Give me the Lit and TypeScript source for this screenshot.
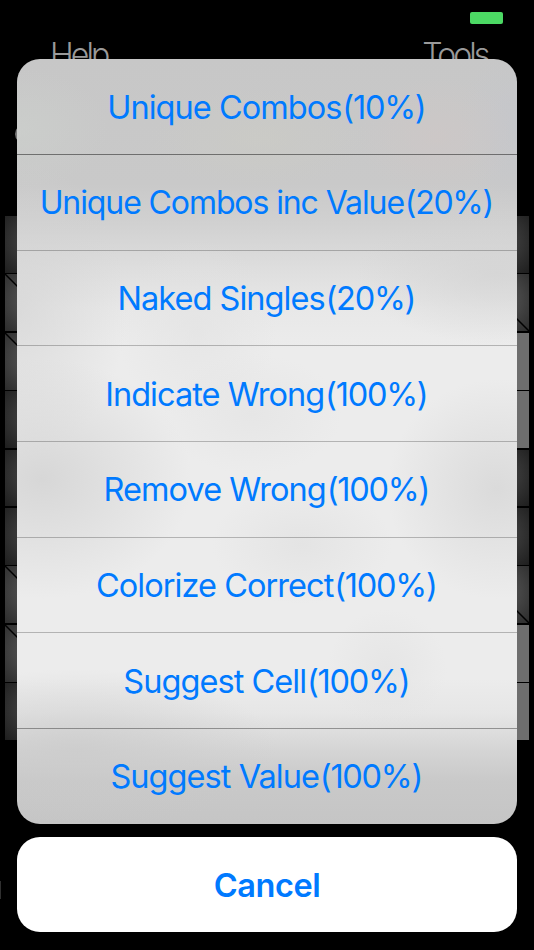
import { LitElement, html, css } from "lit";
import { customElement } from "lit/decorators.js";
import { classMap } from "lit/directives/class-map.js";

interface Action {
  label: string;
  cost: string;
  compact?: boolean;
}

const ACTIONS: Action[] = [
  { label: "Unique Combos", cost: "(10%)" },
  { label: "Unique Combos inc Value", cost: "(20%)", compact: true },
  { label: "Naked Singles", cost: "(20%)" },
  { label: "Indicate Wrong", cost: "(100%)" },
  { label: "Remove Wrong", cost: "(100%)" },
  { label: "Colorize Correct", cost: "(100%)" },
  { label: "Suggest Cell", cost: "(100%)" },
  { label: "Suggest Value", cost: "(100%)" },
];

const LEFT_CLUES = [1, 2, 6, 7];
const RIGHT_CLUES = [1, 6];
const RIGHT_OPEN = [2, 3, 7, 8];
const ROWS = [0, 1, 2, 3, 4, 5, 6, 7, 8];

@customElement("puzzle-board")
class PuzzleBoard extends LitElement {
  static styles = css`
    :host {
      display: flex;
      justify-content: space-between;
      height: 524px;
    }
    .column {
      width: 57px;
      display: grid;
      grid-template-rows: repeat(9, 1fr);
      row-gap: 1.5px;
    }
    .cell {
      background: radial-gradient(circle at 50% 45%, #454545 0%, #363636 45%, #1e1e1e 100%);
    }
    .clue {
      background: radial-gradient(circle at 50% 45%, #585858 0%, #444 50%, #2c2c2c 100%);
    }
    .open {
      background: #6e6e6e;
    }
    svg {
      display: block;
      width: 100%;
      height: 100%;
    }
    line {
      stroke: #000;
      stroke-width: 1.5;
    }
  `;

  cell(clue: boolean, open: boolean) {
    return html`<div class=${classMap({ cell: true, clue, open })}>
      ${clue
        ? html`<svg viewBox="0 0 57 57" preserveAspectRatio="none"><line x1="0" y1="0" x2="57" y2="57" /></svg>`
        : ""}
    </div>`;
  }

  render() {
    return html`
      <div class="column">${ROWS.map((r) => this.cell(LEFT_CLUES.includes(r), false))}</div>
      <div class="column">${ROWS.map((r) => this.cell(RIGHT_CLUES.includes(r), RIGHT_OPEN.includes(r)))}</div>
    `;
  }
}

@customElement("action-sheet")
class ActionSheet extends LitElement {
  static styles = css`
    :host {
      display: flex;
      flex-direction: column;
      gap: 13.4px;
      font-family: Inter, "Liberation Sans", sans-serif;
      font-size: 32.5px;
      color: #007aff;
    }
    .list {
      height: 764.6px;
      border-radius: 23px;
      overflow: hidden;
      display: grid;
      grid-template-rows: 95px repeat(6, 95.65px) 1fr;
      background:
        radial-gradient(90px 60px at 2px 70px, rgba(205, 209, 205, 0.6), transparent),
        radial-gradient(110px 50px at 242px 80px, rgba(203, 203, 197, 0.7), transparent),
        radial-gradient(80px 60px at 420px 78px, rgba(206, 199, 198, 0.7), transparent),
        radial-gradient(60px 80px at 500px 70px, rgba(196, 198, 204, 0.7), transparent),
        radial-gradient(150px 120px at 25px 420px, rgba(211, 211, 211, 0.85), transparent),
        radial-gradient(110px 110px at 480px 430px, rgba(214, 214, 214, 0.8), transparent),
        radial-gradient(90px 60px at 285px 485px, rgba(226, 226, 226, 0.8), transparent),
        radial-gradient(90px 60px at 235px 355px, rgba(226, 226, 226, 0.6), transparent),
        radial-gradient(80px 90px at 180px 270px, rgba(226, 226, 226, 0.6), transparent),
        radial-gradient(60px 60px at 370px 610px, rgba(225, 225, 225, 0.6), transparent),
        radial-gradient(110px 150px at 0px 250px, rgba(212, 212, 212, 0.7), transparent),
        radial-gradient(140px 70px at 480px 215px, rgba(210, 210, 210, 0.7), transparent),
        radial-gradient(200px 80px at 60px 690px, rgba(202, 202, 202, 0.7), transparent),
        linear-gradient(
          to bottom,
          #c7c7c7 0px,
          #c9c9c9 125px,
          #d1d1d1 165px,
          #dedede 210px,
          #e8e8e8 250px,
          #ececec 290px,
          #ececec 620px,
          #e6e6e6 655px,
          #d6d6d6 688px,
          #c9c9c9 722px,
          #c5c5c5 765px
        );
    }
    .action,
    .cancel {
      border: 0;
      margin: 0;
      padding: 2px 0 0;
      background: none;
      font: inherit;
      color: inherit;
      display: flex;
      align-items: center;
      justify-content: center;
      white-space: nowrap;
      letter-spacing: -0.95px;
    }
    .action {
      padding-right: 1.4px;
    }
    .compact {
      font-size: 32px;
      letter-spacing: -1.1px;
    }
    .cost {
      letter-spacing: -1.25px;
      margin-left: 0.8px;
    }
    .action + .action {
      box-shadow: inset 0 1px rgba(0, 0, 0, 0.24);
    }
    .action:nth-child(2) {
      box-shadow: inset 0 1px rgba(0, 0, 0, 0.45);
    }
    .action:nth-child(8) {
      box-shadow: inset 0 1px rgba(0, 0, 0, 0.35);
    }
    .cancel {
      height: 95px;
      border-radius: 23px;
      background: #fff;
      font-weight: 600;
      letter-spacing: -0.45px;
    }
  `;

  render() {
    return html`
      <div class="list">
        ${ACTIONS.map(
          (a) => html`<button class=${classMap({ action: true, compact: !!a.compact })}>
            <span>${a.label}</span><span class="cost">${a.cost}</span>
          </button>`
        )}
      </div>
      <button class="cancel">Cancel</button>
    `;
  }
}

@customElement("app-root")
class AppRoot extends LitElement {
  static styles = css`
    :host {
      display: block;
      position: relative;
      width: 534px;
      height: 950px;
      overflow: hidden;
      background: #000;
      font-family: Inter, "Liberation Sans", sans-serif;
    }
    .screen {
      display: flex;
      flex-direction: column;
      height: 100%;
    }
    .status {
      height: 36px;
      display: flex;
      justify-content: flex-end;
      padding: 12px 31px 0 0;
      box-sizing: border-box;
    }
    .battery {
      width: 33px;
      height: 12px;
      border-radius: 2px;
      background: #4cd964;
    }
    .nav {
      display: flex;
      justify-content: space-between;
      height: 88px;
      padding: 0 46.5px 0 50px;
      font-size: 32px;
      font-weight: 300;
      line-height: 37px;
      letter-spacing: -2.9px;
      color: #9a9a9a;
    }
    .tint {
      width: 20px;
      height: 20px;
      margin: 0 0 72px 15px;
      border-radius: 50%;
      background: #777;
    }
    puzzle-board {
      margin: 0 5px;
    }
    .marker {
      width: 1px;
      height: 18px;
      margin-top: 141px;
      background: #303030;
    }
    action-sheet {
      position: absolute;
      left: 17px;
      right: 17px;
      top: 59px;
    }
  `;

  render() {
    return html`
      <div class="screen">
        <div class="status"><div class="battery"></div></div>
        <div class="nav"><span>Help</span><span>Tools</span></div>
        <div class="tint"></div>
        <puzzle-board></puzzle-board>
        <div class="marker"></div>
      </div>
      <action-sheet></action-sheet>
    `;
  }
}
